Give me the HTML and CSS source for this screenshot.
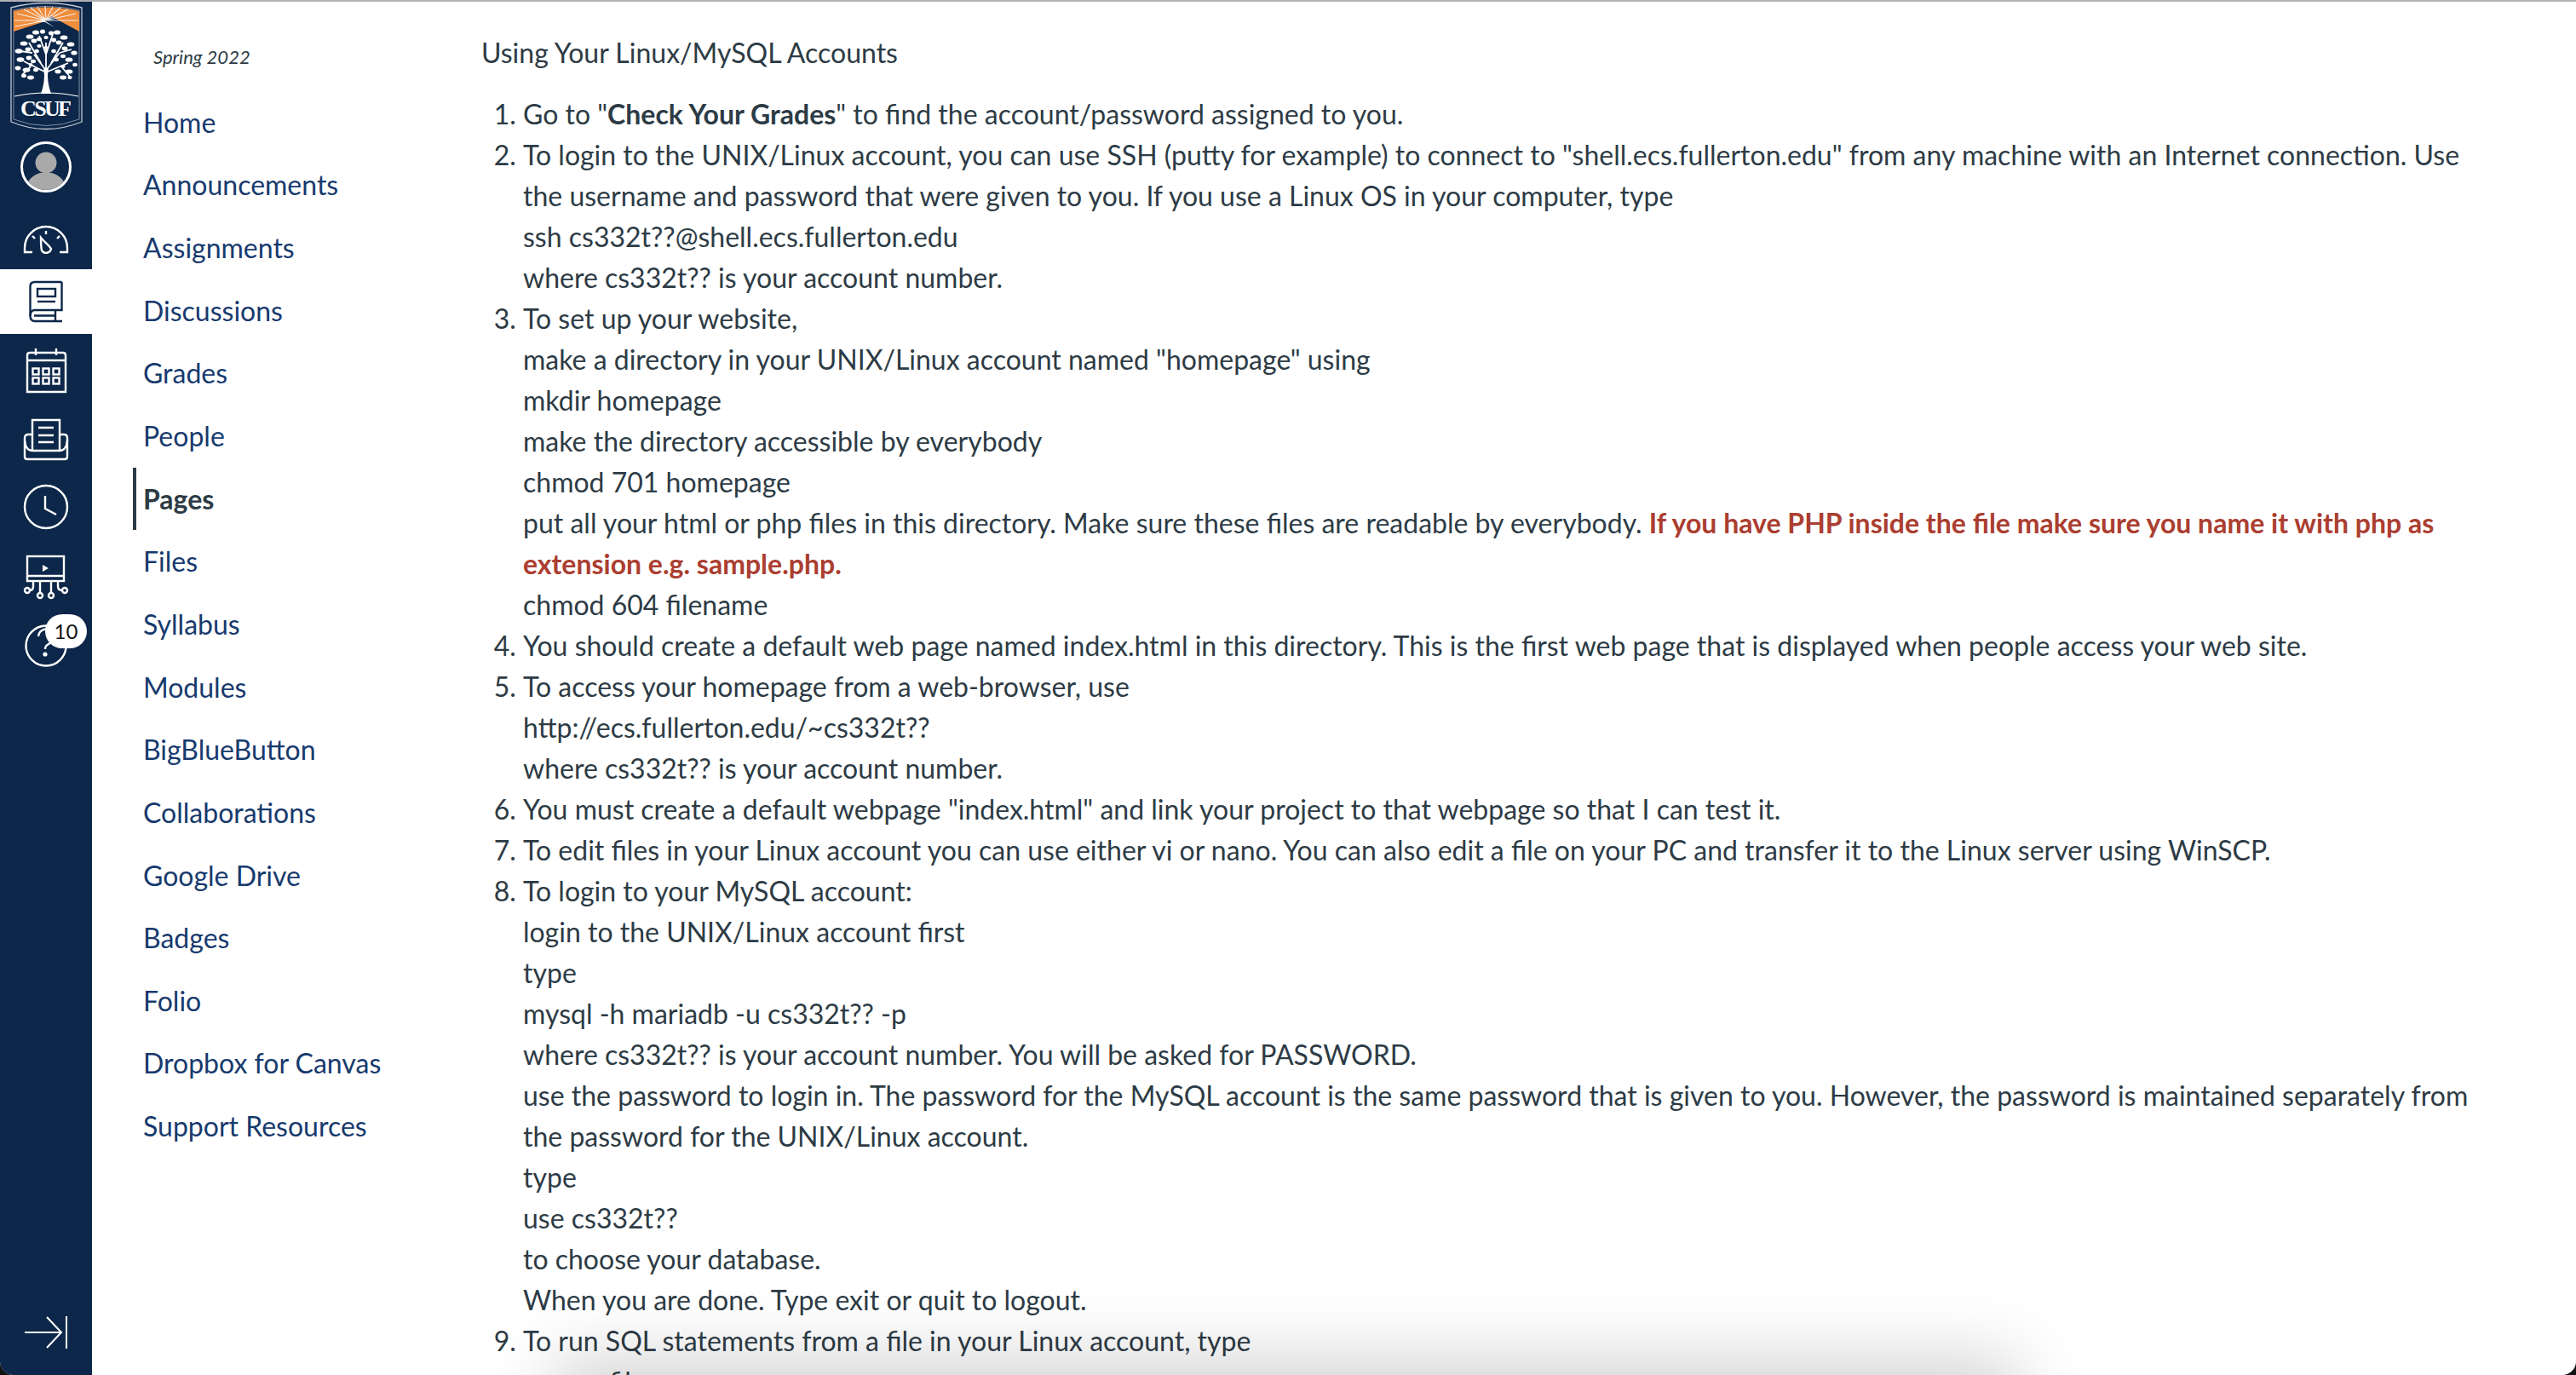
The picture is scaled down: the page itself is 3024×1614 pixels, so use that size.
FILE: index.html
```html
<!DOCTYPE html>
<html lang="en">
<head>
  <meta charset="UTF-8" />
  <title>Using Your Linux/MySQL Accounts</title>
  <link rel="stylesheet" href="styles.css">
</head>
<body>
<div class="window">

  <!-- Global navigation -->
  <aside class="rail">
    <svg class="logo" viewBox="0 0 108 152" width="108" height="152">
      <path d="M13 7 Q54 -4 96 7 V141 Q54 158 13 141 Z" fill="none" stroke="#c3cad4" stroke-width="1.3"/>
      <path d="M16 10 Q54 1 93 10 V138 Q54 153 16 138 Z" fill="none" stroke="#7f8ea3" stroke-width="1"/>
      <path d="M16 11 Q54 2 93 11 V35 L60 17 L50 24 L16 35 Z" fill="#ee8d3e"/>
      <g stroke="#fff" stroke-width="1.1" opacity=".85">
        <path d="M54 22 L20 14 M54 22 L28 9 M54 22 L36 7 M54 22 L44 6 M54 22 L53 5 M54 22 L62 6 M54 22 L71 7 M54 22 L80 9 M54 22 L89 14 M54 22 L92 22 M54 22 L17 22 M54 22 L18 29"/>
      </g>
      <path d="M40 24 L52 22 L64 30 L53 24 Z" fill="#fff"/>
      <path d="M52 108 Q54 90 52 78 L40 62 M54 80 L54 48 M56 108 Q54 90 56 78 L70 60 M52 82 L28 70 M56 82 L80 72 M48 72 L34 48 M60 72 L74 48 M54 62 L46 40 M54 62 L62 38 M38 60 L24 58 M70 60 L84 56 M36 76 L26 86 M72 76 L82 88" fill="none" stroke="#fff" stroke-width="1.8"/>
      <path d="M48 108 Q53 95 52 78 H56 Q55 95 60 108 Z" fill="#fff"/>
      <g fill="#fff">
        <ellipse cx="42" cy="36" rx="4" ry="2.6"/><ellipse cx="50" cy="35" rx="3" ry="2.6"/><ellipse cx="60" cy="37" rx="3" ry="2.4"/><ellipse cx="67" cy="36" rx="4" ry="2.6"/><ellipse cx="75" cy="42" rx="4.4" ry="2.6"/>
        <ellipse cx="35" cy="41" rx="4.4" ry="2.6"/><ellipse cx="28" cy="49" rx="4.4" ry="2.6"/><ellipse cx="40" cy="46" rx="3.4" ry="2.4"/><ellipse cx="46" cy="44" rx="3" ry="2.2"/><ellipse cx="63" cy="45" rx="3" ry="2.4"/><ellipse cx="69" cy="48" rx="3.4" ry="2.4"/>
        <ellipse cx="83" cy="50" rx="4.4" ry="2.6"/><ellipse cx="22" cy="58" rx="4.4" ry="2.8"/><ellipse cx="33" cy="56" rx="3.4" ry="2.4"/><ellipse cx="76" cy="55" rx="3.4" ry="2.4"/><ellipse cx="46" cy="52" rx="2.6" ry="2"/>
        <ellipse cx="87" cy="60" rx="3.6" ry="2.6"/><ellipse cx="24" cy="68" rx="4.4" ry="2.8"/><ellipse cx="34" cy="66" rx="3.4" ry="2.4"/><ellipse cx="39" cy="70" rx="3" ry="2.2"/><ellipse cx="66" cy="68" rx="3" ry="2.2"/><ellipse cx="74" cy="64" rx="3" ry="2.2"/>
        <ellipse cx="81" cy="68" rx="4.4" ry="2.6"/><ellipse cx="88" cy="74" rx="2.8" ry="2.2"/><ellipse cx="21" cy="78" rx="3.4" ry="2.4"/><ellipse cx="31" cy="80" rx="4.4" ry="2.6"/><ellipse cx="42" cy="80" rx="3" ry="2.2"/><ellipse cx="36" cy="74" rx="2.4" ry="2"/>
        <ellipse cx="68" cy="82" rx="3.6" ry="2.4"/><ellipse cx="81" cy="82" rx="4.4" ry="2.6"/><ellipse cx="74" cy="76" rx="2.6" ry="2"/><ellipse cx="36" cy="89" rx="4" ry="2.4"/><ellipse cx="28" cy="87" rx="3" ry="2.2"/>
        <ellipse cx="74" cy="89" rx="4" ry="2.4"/><ellipse cx="82" cy="89" rx="2.6" ry="2"/><ellipse cx="54" cy="42" rx="2.6" ry="2"/><ellipse cx="43" cy="58" rx="2.8" ry="2.2"/><ellipse cx="63" cy="58" rx="2.8" ry="2.2"/><ellipse cx="54" cy="54" rx="2.2" ry="2"/>
      </g>
      <path d="M17 111 Q54 103 92 111" fill="none" stroke="#fff" stroke-width="1.2"/>
      <text class="logo-text" x="54" y="134" text-anchor="middle" textLength="60">CSUF</text>
    </svg>

    <div class="avatar">
      <svg viewBox="0 0 54 54" width="54" height="54">
        <circle cx="27" cy="22" r="12.5" fill="#a9a9a9"/>
        <path d="M2 54 Q6 38 20 34 H34 Q48 38 52 54 Z" fill="#a9a9a9"/>
      </svg>
    </div>

    <div class="rail-item rail-first">
      <svg viewBox="0 0 60 60" width="60" height="60" fill="none" stroke="#fff" stroke-width="2.4">
        <path d="M14 48 H5 V43 A25 25 0 0 1 55 43 V48 H46"/>
        <path d="M30 23 V27 M14 29 L17 32 M46 29 L43 32"/>
        <path d="M24 31 C27 35 34 40 36 44 A6 6 0 0 1 25 46 C24 42 24 36 24 31 Z"/>
      </svg>
    </div>
    <div class="rail-item is-active">
      <svg viewBox="0 0 60 60" width="60" height="60" fill="none" stroke="#0c2749" stroke-width="2.4">
        <path d="M48.5 7 H17 Q11.5 7 11.5 12 V47 Q11.5 53 17 53 H49"/>
        <path d="M48.5 7 V40 H17 Q11.5 40 11.5 47"/>
        <path d="M16 46.5 H40 M41 40 V53"/>
        <rect x="20" y="15" width="21" height="9"/>
        <path d="M20 30 H41"/>
      </svg>
    </div>
    <div class="rail-item">
      <svg viewBox="0 0 60 60" width="60" height="60" fill="none" stroke="#fff" stroke-width="2.4">
        <path d="M8 55 V12 Q8 9 11 9 H50 Q53 9 53 12 V55 Z M8 18 H53"/>
        <path d="M18 4 V12 M42 4 V12"/>
        <rect x="14.5" y="27.5" width="7" height="7"/><rect x="26.5" y="27.5" width="7" height="7"/><rect x="38.5" y="27.5" width="7" height="7"/>
        <rect x="14.5" y="38.5" width="7" height="7"/><rect x="26.5" y="38.5" width="7" height="7"/><rect x="38.5" y="38.5" width="7" height="7"/>
      </svg>
    </div>
    <div class="rail-item">
      <svg viewBox="0 0 60 60" width="60" height="60" fill="none" stroke="#fff" stroke-width="2.4">
        <path d="M14 43 V7 H46 V43"/>
        <path d="M21 16 H39 M21 25 H39 M21 33 H39"/>
        <path d="M14 24 H9 Q5 24 5 28 V50 Q5 53 8 53 H52 Q55 53 55 50 V28 Q55 24 51 24 H46"/>
        <path d="M5 31 Q6 43 14 43 H46 Q54 43 55 31"/>
      </svg>
    </div>
    <div class="rail-item">
      <svg viewBox="0 0 60 60" width="60" height="60" fill="none" stroke="#fff" stroke-width="2.4">
        <circle cx="30" cy="28" r="25"/>
        <path d="M29 15 V30 L42 37"/>
      </svg>
    </div>
    <div class="rail-item">
      <svg viewBox="0 0 60 60" width="60" height="60" fill="none" stroke="#fff" stroke-width="2.4">
        <rect x="8" y="5" width="43" height="29"/>
        <path d="M8 28 H51"/>
        <path d="M26 15 L33 19 L26 23 Z" fill="#fff" stroke="none"/>
        <path d="M23 34 V48 M36 34 V48 M15 34 V40 Q15 45 11 45 M44 34 V40 Q44 45 49 45"/>
        <circle cx="8" cy="45" r="3"/><circle cx="23" cy="51" r="3"/><circle cx="36" cy="51" r="3"/><circle cx="52" cy="45" r="3"/>
      </svg>
    </div>
    <div class="rail-item">
      <svg viewBox="0 0 60 60" width="60" height="60" fill="none" stroke="#fff" stroke-width="2.4">
        <circle cx="30" cy="29" r="23.5"/>
        <path d="M21 18 A9 9 0 1 1 33 27 Q29 29 29 33"/>
        <circle cx="29" cy="39" r="2.6" fill="#fff" stroke="none"/>
      </svg>
      <span class="badge">10</span>
    </div>

    <button class="collapse" type="button" aria-label="Collapse navigation">
      <svg viewBox="0 0 50 38" width="50" height="38" fill="none" stroke="#fff" stroke-width="2">
        <path d="M0 19 H43 M26 1 L43 19 L26 37"/>
        <path d="M49 0 V38"/>
      </svg>
    </button>
  </aside>

  <!-- Course navigation -->
  <nav class="course-nav">
    <div class="term">Spring 2022</div>
    <a href="#">Home</a>
    <a href="#">Announcements</a>
    <a href="#">Assignments</a>
    <a href="#">Discussions</a>
    <a href="#">Grades</a>
    <a href="#">People</a>
    <a href="#" class="current">Pages</a>
    <a href="#">Files</a>
    <a href="#">Syllabus</a>
    <a href="#">Modules</a>
    <a href="#">BigBlueButton</a>
    <a href="#">Collaborations</a>
    <a href="#">Google Drive</a>
    <a href="#">Badges</a>
    <a href="#">Folio</a>
    <a href="#">Dropbox for Canvas</a>
    <a href="#">Support Resources</a>
  </nav>

  <!-- Page body -->
  <main class="content">
    <p class="page-title">Using Your Linux/MySQL Accounts</p>
    <ol>
      <li>Go to "<strong>Check Your Grades</strong>" to find the account/password assigned to you.</li>
      <li>To login to the UNIX/Linux account, you can use SSH (putty for example) to connect to "shell.ecs.fullerton.edu" from any machine with an Internet connection. Use the username and password that were given to you. If you use a Linux OS in your computer, type<br>
        ssh cs332t??@shell.ecs.fullerton.edu<br>
        where cs332t?? is your account number.</li>
      <li>To set up your website,<br>
        make a directory in your UNIX/Linux account named "homepage" using<br>
        mkdir homepage<br>
        make the directory accessible by everybody<br>
        chmod 701 homepage<br>
        put all your html or php files in this directory. Make sure these files are readable by everybody. <strong class="warn">If you have PHP inside the file make sure you name it with php as extension e.g. sample.php.</strong><br>
        chmod 604 filename</li>
      <li>You should create a default web page named index.html in this directory. This is the first web page that is displayed when people access your web site.</li>
      <li>To access your homepage from a web-browser, use<br>
        http://ecs.fullerton.edu/~cs332t??<br>
        where cs332t?? is your account number.</li>
      <li>You must create a default webpage "index.html" and link your project to that webpage so that I can test it.</li>
      <li>To edit files in your Linux account you can use either vi or nano. You can also edit a file on your PC and transfer it to the Linux server using WinSCP.</li>
      <li>To login to your MySQL account:<br>
        login to the UNIX/Linux account first<br>
        type<br>
        mysql -h mariadb -u cs332t?? -p<br>
        where cs332t?? is your account number. You will be asked for PASSWORD.<br>
        use the password to login in. The password for the MySQL account is the same password that is given to you. However, the password is maintained separately from the password for the UNIX/Linux account.<br>
        type<br>
        use cs332t??<br>
        to choose your database.<br>
        When you are done. Type exit or quit to logout.</li>
      <li>To run SQL statements from a file in your Linux account, type<br>
        source filename</li>
    </ol>
  </main>

  <div class="bottom-shadow"></div>
</div>
</body>
</html>
```

FILE: styles.css
```css
* {
  box-sizing: border-box;
}
html, body {
  margin: 0;
  height: 100%;
  background-color: #111;
}
body {
  font-family: Lato, "Open Sans", sans-serif;
  font-size: 32px;
  line-height: 48px;
  color: #2d3b45;
  overflow: hidden;
}
.window {
  position: relative;
  display: flex;
  height: 1614px;
  background-color: #fff;
  border-top: 2px solid #b1b1b6;
  border-radius: 0 0 16px 16px;
  overflow: hidden;
}

/* left rail */
.rail {
  position: relative;
  flex: 0 0 108px;
  display: flex;
  flex-direction: column;
  align-items: center;
  background-color: #0c2749;
}
.logo {
  display: block;
  flex: none;
}
.logo-text {
  font-family: "Liberation Serif", serif;
  font-size: 26px;
  font-weight: bold;
  fill: #fff;
}
.avatar {
  width: 60px;
  height: 60px;
  margin-top: 12px;
  margin-bottom: 14px;
  border: 3px solid #fff;
  border-radius: 50%;
  overflow: hidden;
}
.avatar svg {
  display: block;
}
.rail-item {
  position: relative;
  flex: none;
  width: 108px;
  height: 76px;
  margin-bottom: 5px;
  display: flex;
  align-items: center;
  justify-content: center;
}
.rail-first {
  margin-bottom: 0;
}
.rail-item.is-active {
  background-color: #fff;
}
.badge {
  position: absolute;
  left: 53px;
  top: 0;
  width: 49px;
  height: 40px;
  border-radius: 20px;
  background-color: #fff;
  color: #111;
  font-size: 24px;
  line-height: 40px;
  text-align: center;
}
.collapse {
  position: absolute;
  left: 29px;
  top: 1543px;
  width: 50px;
  height: 38px;
  padding: 0;
  border: none;
  background: none;
}
.collapse svg {
  display: block;
}

/* course nav */
.course-nav {
  flex: 0 0 457px;
  padding-top: 45px;
  padding-left: 48px;
}
.term {
  height: 60px;
  padding-left: 24px;
  font-size: 22px;
  line-height: 40px;
  font-style: italic;
}
.course-nav a {
  display: flex;
  align-items: center;
  height: 73.65px;
  padding-left: 8px;
  border-left: 4px solid transparent;
  color: #173a6e;
  text-decoration: none;
}
.course-nav a.current {
  border-left-color: #2d3b45;
  color: #2d3b45;
  font-weight: bold;
}

/* page body */
.content {
  flex: 1;
  padding-top: 36px;
  padding-right: 104px;
}
.page-title {
  margin: 0 0 24px;
}
.content ol {
  margin: 0;
  padding-left: 49px;
}
.warn {
  color: #ab3e30;
}

.bottom-shadow {
  position: absolute;
  left: 650px;
  top: 1640px;
  width: 1720px;
  height: 120px;
  box-shadow: 0 -50px 80px rgba(0, 0, 0, 0.17);
}
```
